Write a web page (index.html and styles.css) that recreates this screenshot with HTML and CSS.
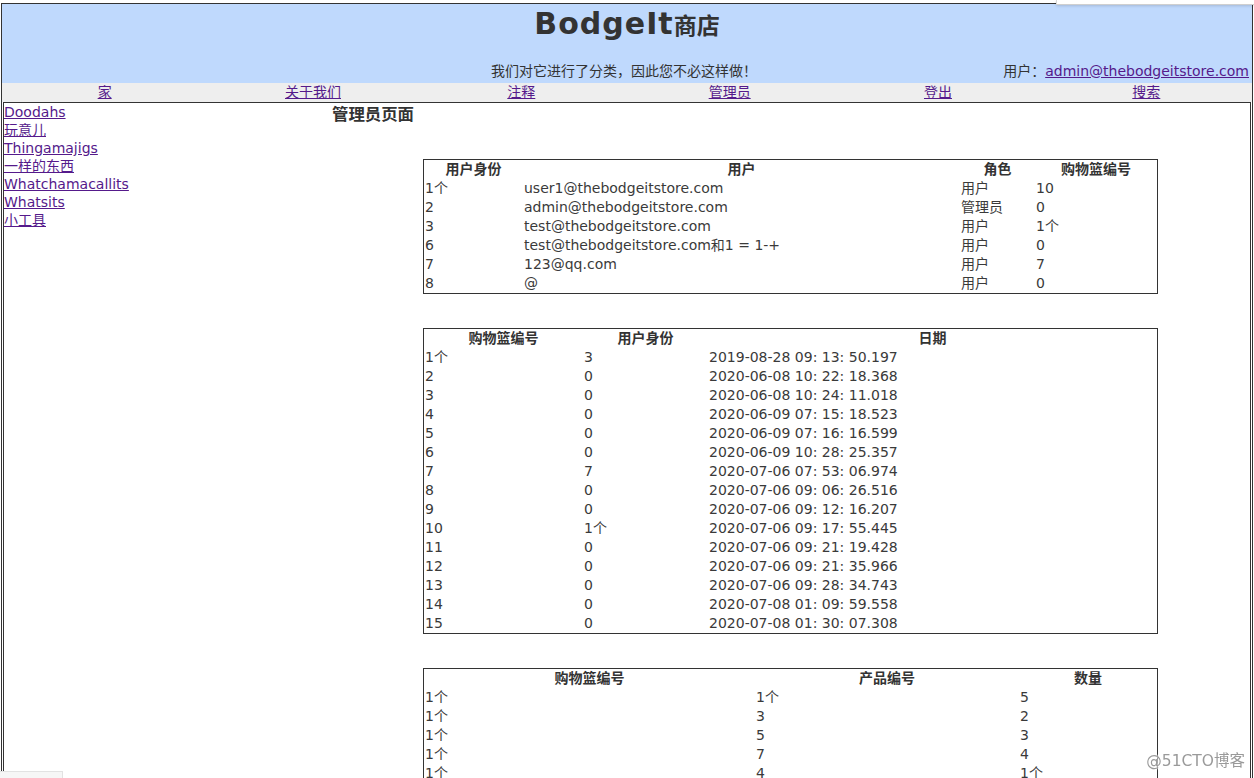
FILE: index.html
```html
<!DOCTYPE html>
<html lang="zh">
<head>
<meta charset="utf-8">
<title>BodgeIt商店</title>
<link rel="stylesheet" href="styles.css">
</head>
<body>
<div class="page">
  <header class="masthead">
    <h1 class="title">BodgeIt<span class="title-cjk">商店</span></h1>
    <div class="tagline-row">
      <div class="tag-left"></div>
      <div class="tag-mid">我们对它进行了分类，因此您不必这样做！</div>
      <div class="tag-right">用户：<a href="#">admin@thebodgeitstore.com</a></div>
    </div>
  </header>
  <nav class="menubar">
    <div class="menu-cell"><a href="#">家</a></div>
    <div class="menu-cell"><a href="#">关于我们</a></div>
    <div class="menu-cell"><a href="#">注释</a></div>
    <div class="menu-cell"><a href="#">管理员</a></div>
    <div class="menu-cell"><a href="#">登出</a></div>
    <div class="menu-cell"><a href="#">搜索</a></div>
  </nav>
  <div class="content">
    <aside class="sidebar">
      <a href="#">Doodahs</a>
      <a href="#">玩意儿</a>
      <a href="#">Thingamajigs</a>
      <a href="#">一样的东西</a>
      <a href="#">Whatchamacallits</a>
      <a href="#">Whatsits</a>
      <a href="#">小工具</a>
    </aside>
    <main class="main">
      <h3 class="page-title">管理员页面</h3>

      <table class="data t-users">
        <colgroup><col class="c1"><col class="c2"><col class="c3"><col class="c4"></colgroup>
        <tr><th>用户身份</th><th>用户</th><th>角色</th><th>购物篮编号</th></tr>
        <tr><td>1个</td><td>user1@thebodgeitstore.com</td><td>用户</td><td>10</td></tr>
        <tr><td>2</td><td>admin@thebodgeitstore.com</td><td>管理员</td><td>0</td></tr>
        <tr><td>3</td><td>test@thebodgeitstore.com</td><td>用户</td><td>1个</td></tr>
        <tr><td>6</td><td>test@thebodgeitstore.com和1 = 1-+</td><td>用户</td><td>0</td></tr>
        <tr><td>7</td><td>123@qq.com</td><td>用户</td><td>7</td></tr>
        <tr><td>8</td><td>@</td><td>用户</td><td>0</td></tr>
      </table>

      <table class="data t-baskets">
        <colgroup><col class="c1"><col class="c2"><col class="c3"></colgroup>
        <tr><th>购物篮编号</th><th>用户身份</th><th>日期</th></tr>
        <tr><td>1个</td><td>3</td><td>2019-08-28 09: 13: 50.197</td></tr>
        <tr><td>2</td><td>0</td><td>2020-06-08 10: 22: 18.368</td></tr>
        <tr><td>3</td><td>0</td><td>2020-06-08 10: 24: 11.018</td></tr>
        <tr><td>4</td><td>0</td><td>2020-06-09 07: 15: 18.523</td></tr>
        <tr><td>5</td><td>0</td><td>2020-06-09 07: 16: 16.599</td></tr>
        <tr><td>6</td><td>0</td><td>2020-06-09 10: 28: 25.357</td></tr>
        <tr><td>7</td><td>7</td><td>2020-07-06 07: 53: 06.974</td></tr>
        <tr><td>8</td><td>0</td><td>2020-07-06 09: 06: 26.516</td></tr>
        <tr><td>9</td><td>0</td><td>2020-07-06 09: 12: 16.207</td></tr>
        <tr><td>10</td><td>1个</td><td>2020-07-06 09: 17: 55.445</td></tr>
        <tr><td>11</td><td>0</td><td>2020-07-06 09: 21: 19.428</td></tr>
        <tr><td>12</td><td>0</td><td>2020-07-06 09: 21: 35.966</td></tr>
        <tr><td>13</td><td>0</td><td>2020-07-06 09: 28: 34.743</td></tr>
        <tr><td>14</td><td>0</td><td>2020-07-08 01: 09: 59.558</td></tr>
        <tr><td>15</td><td>0</td><td>2020-07-08 01: 30: 07.308</td></tr>
      </table>

      <table class="data t-items">
        <colgroup><col class="c1"><col class="c2"><col class="c3"></colgroup>
        <tr><th>购物篮编号</th><th>产品编号</th><th>数量</th></tr>
        <tr><td>1个</td><td>1个</td><td>5</td></tr>
        <tr><td>1个</td><td>3</td><td>2</td></tr>
        <tr><td>1个</td><td>5</td><td>3</td></tr>
        <tr><td>1个</td><td>7</td><td>4</td></tr>
        <tr><td>1个</td><td>4</td><td>1个</td></tr>
      </table>
    </main>
  </div>
</div>
<div class="popup-edge"></div>
<div class="status-stub"></div>
<div class="watermark">@51CTO博客</div>
</body>
</html>
```

FILE: styles.css
```css
html, body {
  overflow: hidden;
}

body {
  margin: 0;
  font-family: "DejaVu Sans", "Noto Sans CJK SC", sans-serif;
  font-size: 14px;
  color: #333;
  background: #fff;
}

a {
  color: #551a8b;
  text-decoration: underline;
}

.page {
  margin: 3px 1px 0;
  border: 1px solid #333;
  min-height: 900px;
}

/* header */
.masthead {
  background: #bfd9fd;
  height: 79px;
  display: flex;
  flex-direction: column;
}

.title {
  margin: 0;
  height: 40px;
  line-height: 40px;
  text-align: center;
  font-size: 30px;
  font-weight: bold;
  letter-spacing: 1px;
  color: #333;
}

.title-cjk {
  font-size: 23px;
  letter-spacing: 0;
}

.tagline-row {
  margin-top: auto;
  display: grid;
  grid-template-columns: 30% 40% 30%;
  height: 20px;
  line-height: 20px;
  padding-bottom: 2px;
}

.tag-mid {
  text-align: center;
  white-space: nowrap;
  padding-right: 6px;
}

.tag-right {
  text-align: right;
  white-space: nowrap;
  padding-right: 3px;
}

/* menu */
.menubar {
  display: grid;
  grid-template-columns: repeat(6, 1fr);
  background: #eeeeee;
  height: 19px;
  line-height: 19px;
}

.menu-cell {
  text-align: center;
  padding-right: 3px;
}

/* body */
.content {
  margin: 0 1px;
  border: 1px solid #333;
  display: flex;
  align-items: flex-start;
  min-height: 800px;
}

.sidebar {
  width: 327px;
  flex: none;
  display: flex;
  flex-direction: column;
  align-items: flex-start;
  line-height: 18px;
}

.main {
  flex: 1;
}

.page-title {
  margin: 2px 0 34px;
  padding-left: 1px;
  font-size: 16.4px;
  line-height: 20px;
  font-weight: bold;
}

/* tables */
.data {
  width: 735px;
  margin: 0 auto;
  border: 1px solid #333;
  border-collapse: separate;
  border-spacing: 0;
  table-layout: fixed;
}

.data + .data {
  margin-top: 34px;
}

.data th,
.data td {
  height: 19px;
  line-height: 19px;
  padding: 0 1px;
  white-space: nowrap;
  overflow: hidden;
}

.data th {
  font-weight: bold;
  text-align: center;
}

.data td {
  text-align: left;
  color: #3a3a3a;
}

.t-users .c1 { width: 99px; }
.t-users .c2 { width: 437px; }
.t-users .c3 { width: 75px; }
.t-users .c4 { width: 122px; }

.t-baskets .c1 { width: 159px; }
.t-baskets .c2 { width: 125px; }
.t-baskets .c3 { width: 449px; }

.t-items .c1 { width: 331px; }
.t-items .c2 { width: 264px; }
.t-items .c3 { width: 138px; }

/* overlays */
.popup-edge {
  position: fixed;
  top: 0;
  left: 1056px;
  right: 0;
  height: 4px;
  background: #fff;
  border-left: 1px solid #d8d8d8;
  border-bottom: 1px solid #cfcfcf;
  box-shadow: 0 1px 3px rgba(0, 0, 0, 0.15);
}

.status-stub {
  position: fixed;
  left: 0;
  bottom: 0;
  width: 62px;
  height: 6px;
  background: #f6f6f6;
  border-top: 1px solid #e2e2e2;
  border-right: 1px solid #e2e2e2;
}

.watermark {
  position: fixed;
  right: 9px;
  bottom: 8px;
  font-size: 15.5px;
  line-height: 18px;
  color: #9a9a9a;
  text-shadow: 0 0 2px #fff, 0 0 2px #fff;
  white-space: nowrap;
}
```
